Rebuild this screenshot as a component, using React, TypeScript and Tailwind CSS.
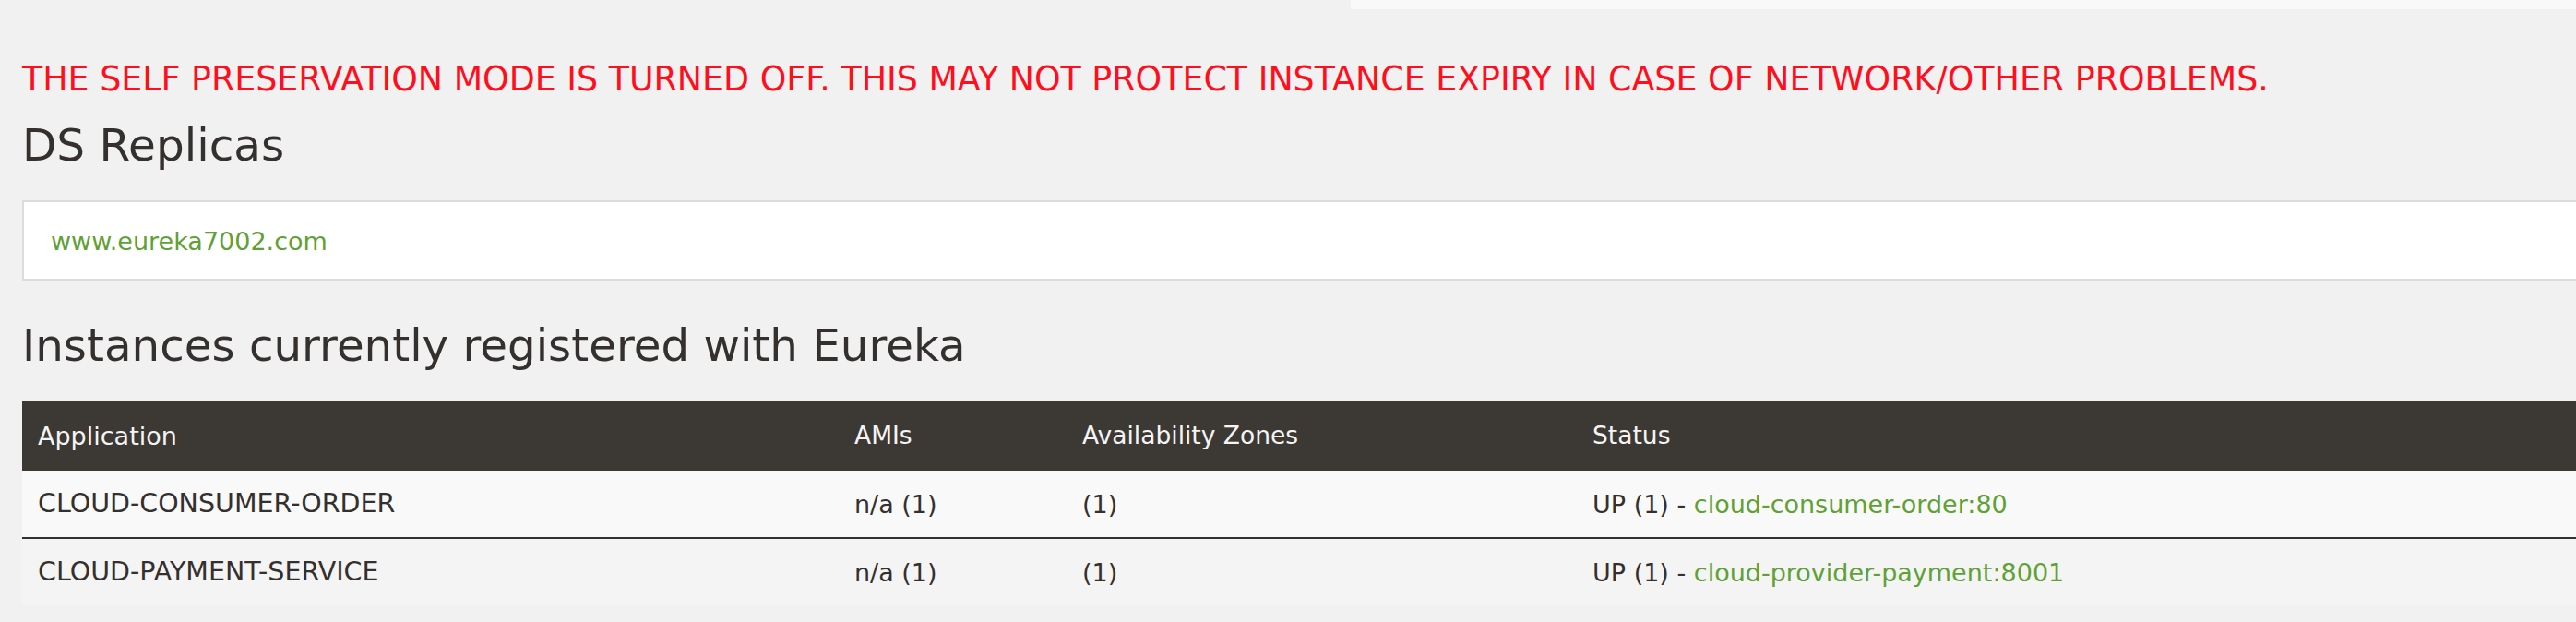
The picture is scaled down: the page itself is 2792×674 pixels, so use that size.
const rows = [
  { app: "CLOUD-CONSUMER-ORDER", amis: "n/a (1)", zones: "(1)", host: "cloud-consumer-order:80" },
  { app: "CLOUD-PAYMENT-SERVICE", amis: "n/a (1)", zones: "(1)", host: "cloud-provider-payment:8001" },
];

export default function App() {
  return (
    <div className="min-h-[674px] w-full overflow-hidden bg-[#f1f1f1] text-[#34302d] font-['DejaVu_Sans',sans-serif]">
      <div className="ml-[1464px] h-[10px] bg-[#f9f9f9]" />

      <div className="pl-[24px] mr-[-40px]">
        <h4 className="mt-[58px] text-[36.4px] leading-none text-[#ff0f1e]">
          THE SELF PRESERVATION MODE IS TURNED OFF. THIS MAY NOT PROTECT INSTANCE EXPIRY IN CASE OF NETWORK/OTHER PROBLEMS.
        </h4>

        <h1 className="mt-[29px] text-[48.5px] leading-none">DS Replicas</h1>

        <ul className="mt-[35px] border-2 border-[#dcdcdc] bg-white pl-[29px] pt-[29px] pb-[24px]">
          <li>
            <a className="text-[27px] leading-none text-[#5fa134]">www.eureka7002.com</a>
          </li>
        </ul>

        <h2 className="mt-[46px] text-[48.3px] leading-none">Instances currently registered with Eureka</h2>

        <div className="mt-[36px]">
          <div className="grid h-[76px] grid-cols-[885px_247px_553px_1fr] items-center bg-[#3c3934] text-[26.5px] leading-none text-[#f4f4f4]">
            <div className="pl-[17px] text-[27px]">Application</div>
            <div className="pl-[17px]">AMIs</div>
            <div className="pl-[17px]">Availability Zones</div>
            <div className="pl-[17px]">Status</div>
          </div>
          {rows.map((r, i) => (
            <div
              key={r.app}
              className={
                i === 0
                  ? "grid h-[72px] grid-cols-[885px_247px_553px_1fr] items-center bg-[#f9f9f9] text-[27px] leading-none"
                  : "grid h-[74px] grid-cols-[885px_247px_553px_1fr] items-center border-t-2 border-[#34302d] bg-[#f4f4f4] text-[27px] leading-none"
              }
            >
              <div className="pl-[17px] text-[28.5px]">{r.app}</div>
              <div className="pl-[17px]">{r.amis}</div>
              <div className="pl-[17px]">{r.zones}</div>
              <div className="pl-[17px]">
                UP (1) - <a className="text-[#5fa134]">{r.host}</a>
              </div>
            </div>
          ))}
        </div>
      </div>
    </div>
  );
}
